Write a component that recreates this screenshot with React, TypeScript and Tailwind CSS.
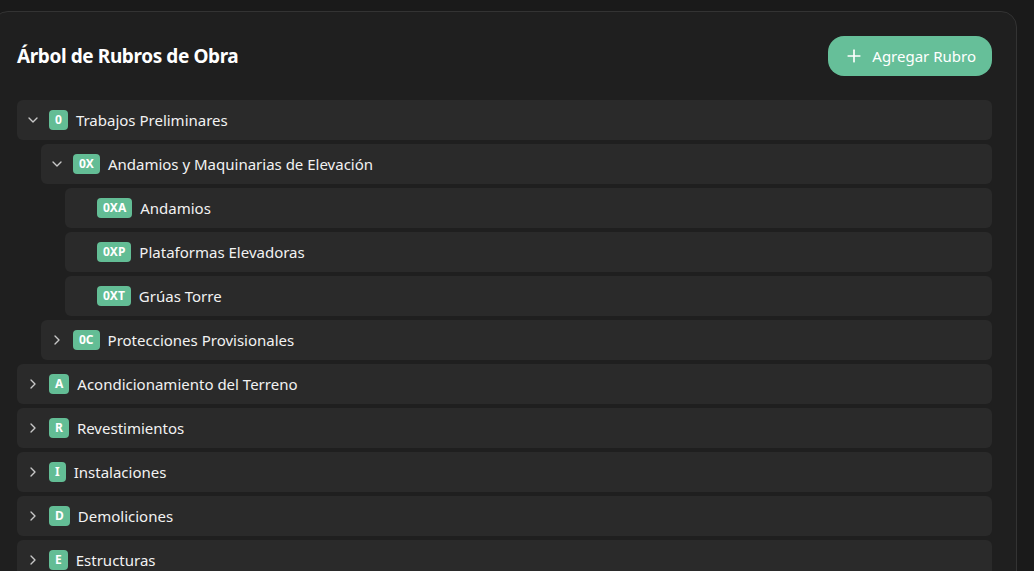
import { ChevronDown, ChevronRight, Plus } from "lucide-react";

type Rubro = {
  code: string;
  name: string;
  open?: boolean;
  leaf?: boolean;
  children?: Rubro[];
};

const rubros: Rubro[] = [
  {
    code: "0",
    name: "Trabajos Preliminares",
    open: true,
    children: [
      {
        code: "0X",
        name: "Andamios y Maquinarias de Elevación",
        open: true,
        children: [
          { code: "0XA", name: "Andamios", leaf: true },
          { code: "0XP", name: "Plataformas Elevadoras", leaf: true },
          { code: "0XT", name: "Grúas Torre", leaf: true },
        ],
      },
      { code: "0C", name: "Protecciones Provisionales" },
    ],
  },
  { code: "A", name: "Acondicionamiento del Terreno" },
  { code: "R", name: "Revestimientos" },
  { code: "I", name: "Instalaciones" },
  { code: "D", name: "Demoliciones" },
  { code: "E", name: "Estructuras" },
];

function RubroRow({ rubro }: { rubro: Rubro }) {
  return (
    <div className="flex flex-col gap-1">
      <div className="flex h-10 items-center gap-2 rounded-md bg-[#2a2a2a] pl-2 text-[15px] text-[#f2f2f2]">
        <span className="flex w-4 items-center justify-center text-[#c8c8c8]">
          {rubro.leaf ? null : rubro.open ? (
            <ChevronDown size={16} strokeWidth={2} />
          ) : (
            <ChevronRight size={16} strokeWidth={2} />
          )}
        </span>
        <span className="flex h-5 items-center rounded bg-[#63bd95] px-1.5 text-[12px] font-bold text-white">
          {rubro.code}
        </span>
        <span>{rubro.name}</span>
      </div>
      {rubro.open && rubro.children && (
        <div className="flex flex-col gap-1 pl-6">
          {rubro.children.map((c) => (
            <RubroRow key={c.code} rubro={c} />
          ))}
        </div>
      )}
    </div>
  );
}

export default function App() {
  return (
    <div className="min-h-screen overflow-hidden bg-[#1a1a1a] pt-[11px] font-['Noto_Sans','Open_Sans',sans-serif]">
      <div className="-ml-2 mr-[17px] rounded-2xl border border-[#333] bg-[#1f1f1f] px-6 pt-6 pb-6">
        <div className="flex h-10 items-center justify-between">
          <h2 className="text-[19px] font-bold tracking-[-0.4px] text-white">Árbol de Rubros de Obra</h2>
          <button className="flex h-10 items-center gap-2 rounded-2xl bg-[#66bf99] px-4 text-[15px] text-white">
            <Plus size={20} strokeWidth={2} />
            Agregar Rubro
          </button>
        </div>
        <div className="mt-6 flex flex-col gap-1">
          {rubros.map((r) => (
            <RubroRow key={r.code} rubro={r} />
          ))}
        </div>
      </div>
    </div>
  );
}
